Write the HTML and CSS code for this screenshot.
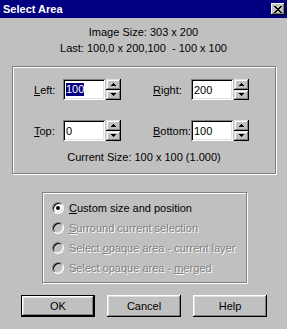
FILE: index.html
```html
<!DOCTYPE html>
<html lang="en">

<head>
  <meta charset="UTF-8">
  <title>Select Area</title>
  <link rel="stylesheet" href="styles.css">
</head>

<body>

  <div class="window">

    <!-- Title bar -->
    <div class="titlebar">
      <span class="title">Select Area</span>
      <span class="close">
        <svg width="8" height="7" viewBox="0 0 8 7" shape-rendering="crispEdges">
          <path d="M0 0h2v1h-2z M6 0h2v1h-2z M1 1h2v1h-2z M5 1h2v1h-2z M2 2h4v1h-4z M3 3h2v1h-2z M2 4h4v1h-4z M1 5h2v1h-2z M5 5h2v1h-2z M0 6h2v1h-2z M6 6h2v1h-2z" fill="#000"/>
        </svg>
      </span>
    </div>

    <div class="dialog">

      <!-- Image info -->
      <div class="info">
        <p>Image Size: 303 x 200</p>
        <p>Last: 100,0 x 200,100&nbsp; - 100 x 100</p>
      </div>

      <!-- Bounds -->
      <div class="group bounds">
        <div class="fields">
          <span class="field-label"><u>L</u>eft:</span>
          <div class="spin">
            <div class="edit"><span class="selected">100</span></div>
            <div class="spin-buttons">
              <span class="spin-btn"><svg width="5" height="3" shape-rendering="crispEdges"><path d="M2 0h1v1h-1z M1 1h3v1h-3z M0 2h5v1h-5z" fill="#000"/></svg></span>
              <span class="spin-btn"><svg width="5" height="3" shape-rendering="crispEdges"><path d="M0 0h5v1h-5z M1 1h3v1h-3z M2 2h1v1h-1z" fill="#000"/></svg></span>
            </div>
          </div>
          <span class="spacer"></span>
          <span class="field-label"><u>R</u>ight:</span>
          <div class="spin">
            <div class="edit">200</div>
            <div class="spin-buttons">
              <span class="spin-btn"><svg width="5" height="3" shape-rendering="crispEdges"><path d="M2 0h1v1h-1z M1 1h3v1h-3z M0 2h5v1h-5z" fill="#000"/></svg></span>
              <span class="spin-btn"><svg width="5" height="3" shape-rendering="crispEdges"><path d="M0 0h5v1h-5z M1 1h3v1h-3z M2 2h1v1h-1z" fill="#000"/></svg></span>
            </div>
          </div>

          <span class="field-label"><u>T</u>op:</span>
          <div class="spin">
            <div class="edit">0</div>
            <div class="spin-buttons">
              <span class="spin-btn"><svg width="5" height="3" shape-rendering="crispEdges"><path d="M2 0h1v1h-1z M1 1h3v1h-3z M0 2h5v1h-5z" fill="#000"/></svg></span>
              <span class="spin-btn"><svg width="5" height="3" shape-rendering="crispEdges"><path d="M0 0h5v1h-5z M1 1h3v1h-3z M2 2h1v1h-1z" fill="#000"/></svg></span>
            </div>
          </div>
          <span class="spacer"></span>
          <span class="field-label"><u>B</u>ottom:</span>
          <div class="spin">
            <div class="edit">100</div>
            <div class="spin-buttons">
              <span class="spin-btn"><svg width="5" height="3" shape-rendering="crispEdges"><path d="M2 0h1v1h-1z M1 1h3v1h-3z M0 2h5v1h-5z" fill="#000"/></svg></span>
              <span class="spin-btn"><svg width="5" height="3" shape-rendering="crispEdges"><path d="M0 0h5v1h-5z M1 1h3v1h-3z M2 2h1v1h-1z" fill="#000"/></svg></span>
            </div>
          </div>
        </div>
        <p class="current">Current Size: 100 x 100 (1.000)</p>
      </div>

      <!-- Selection mode -->
      <div class="group modes">
        <div class="radio-row">
          <span class="radio checked"></span>
          <span><u>C</u>ustom size and position</span>
        </div>
        <div class="radio-row disabled">
          <span class="radio"></span>
          <span><u>S</u>urround current selection</span>
        </div>
        <div class="radio-row disabled">
          <span class="radio"></span>
          <span>Select <u>o</u>paque area - current layer</span>
        </div>
        <div class="radio-row disabled">
          <span class="radio"></span>
          <span>Select opaque area - <u>m</u>erged</span>
        </div>
      </div>

      <!-- Buttons -->
      <div class="buttons">
        <button class="btn default">OK</button>
        <button class="btn">Cancel</button>
        <button class="btn">Help</button>
      </div>

    </div>
  </div>

</body>

</html>
```

FILE: styles.css
```css
/* Reset */
* {
  margin: 0;
  padding: 0;
  box-sizing: border-box;
}

body {
  font-family: 'Liberation Sans', Arial, sans-serif;
  font-size: 11px;
  color: #000;
  background: #c0c0c0;
}

.window {
  width: 287px;
  height: 329px;
  background: #c0c0c0;
}

/* Title bar */
.titlebar {
  height: 18px;
  background: #000080;
  color: #fff;
  display: flex;
  align-items: center;
  justify-content: space-between;
  padding: 0 2px 0 3px;
}

.title {
  font-weight: bold;
  font-size: 11px;
}

.close {
  width: 14px;
  height: 12px;
  background: #c0c0c0;
  display: flex;
  align-items: center;
  justify-content: center;
  box-shadow: inset -1px -1px 0 #000, inset 1px 1px 0 #fff, inset -2px -2px 0 #808080;
}

/* Info lines */
.info {
  padding-top: 6px;
  text-align: center;
  line-height: 16px;
}

/* Etched group box */
.group {
  border: 1px solid #808080;
  box-shadow: inset 1px 1px 0 #fff, 1px 1px 0 #fff;
}

.bounds {
  margin: 10px 0 0 12px;
  width: 264px;
  height: 108px;
  padding: 12px 0 0 21px;
}

.fields {
  display: grid;
  grid-template-columns: 29px 58px 32px 38px 58px;
  grid-auto-rows: 21px;
  row-gap: 20px;
  align-items: center;
}

.spin {
  display: flex;
  height: 21px;
}

.edit {
  width: 42px;
  height: 21px;
  background: #fff;
  padding-left: 3px;
  display: flex;
  align-items: center;
  box-shadow: inset 1px 1px 0 #808080, inset -1px -1px 0 #fff, inset 2px 2px 0 #000, inset -2px -2px 0 #dfdfdf;
}

.selected {
  background: #000080;
  color: #fff;
  line-height: 13px;
}

.spin-buttons {
  margin-left: 1px;
  width: 15px;
  display: flex;
  flex-direction: column;
}

.spin-btn {
  flex: 1;
  display: flex;
  align-items: center;
  justify-content: center;
  background: #c0c0c0;
  box-shadow: inset -1px -1px 0 #000, inset 1px 1px 0 #dfdfdf, inset -2px -2px 0 #808080, inset 2px 2px 0 #fff;
}

.current {
  margin-top: 8px;
  margin-left: -21px;
  text-align: center;
  line-height: 16px;
}

/* Radio group */
.modes {
  margin: 18px 0 0 42px;
  width: 205px;
  height: 91px;
  padding: 5px 0 0 9px;
}

.radio-row {
  height: 20px;
  display: flex;
  align-items: center;
  gap: 5px;
}

.radio {
  width: 12px;
  height: 12px;
  border-radius: 50%;
  background: #fff;
  border: 1px solid;
  border-color: #808080 #fff #fff #808080;
  box-shadow: inset 1px 1px 0 #000, inset -1px -1px 0 #dfdfdf;
  display: flex;
  align-items: center;
  justify-content: center;
}

.radio.checked::after {
  content: '';
  width: 4px;
  height: 4px;
  border-radius: 50%;
  background: #000;
}

.disabled {
  color: #808080;
  text-shadow: 1px 1px 0 #fff;
}

.disabled .radio {
  background: #c0c0c0;
}

/* Buttons */
.buttons {
  margin-top: 12px;
  padding-left: 21px;
  display: flex;
  gap: 12px;
}

.btn {
  width: 74px;
  height: 22px;
  font-family: 'Liberation Sans', Arial, sans-serif;
  font-size: 11px;
  color: #000;
  background: #c0c0c0;
  border: none;
  box-shadow: inset -1px -1px 0 #000, inset 1px 1px 0 #fff, inset -2px -2px 0 #808080, inset 2px 2px 0 #dfdfdf;
}

.btn.default {
  border: 1px solid #000;
}
```
